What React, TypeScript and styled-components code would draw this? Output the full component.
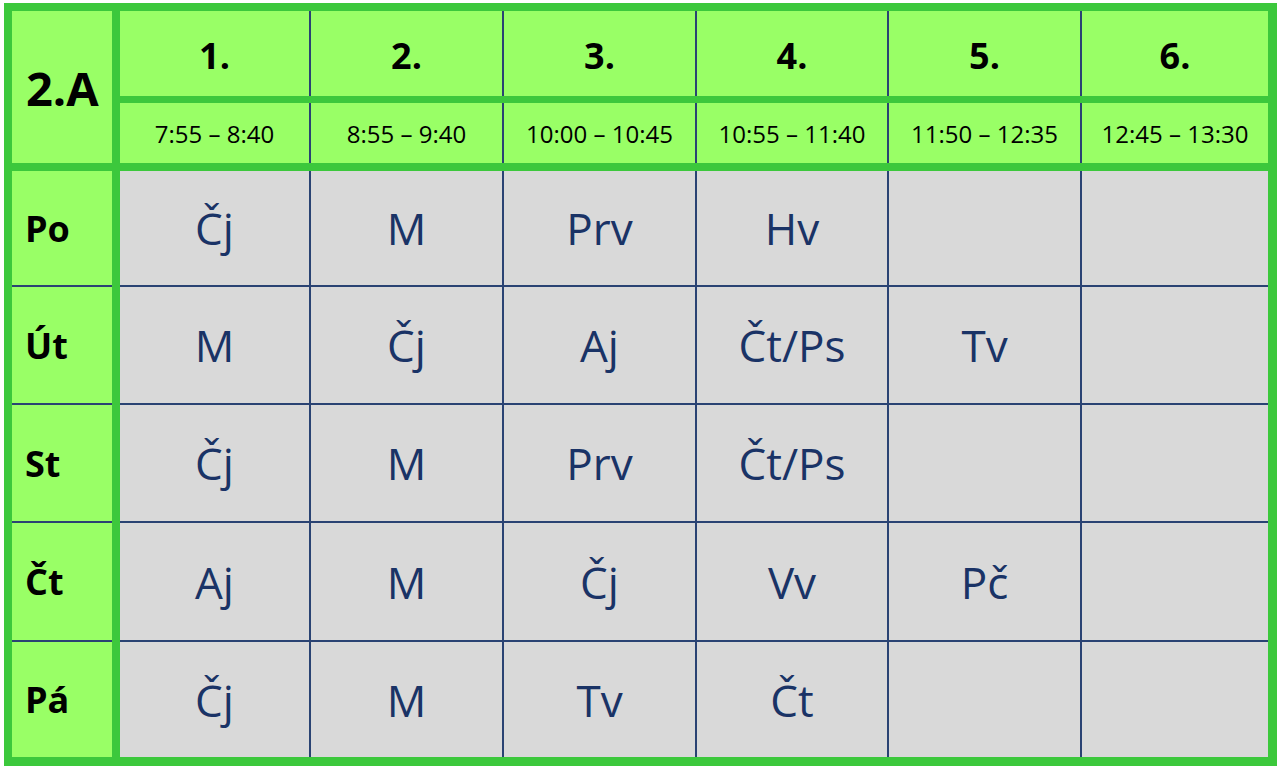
import styled, { createGlobalStyle } from "styled-components";

const GlobalStyle = createGlobalStyle`
  html, body {
    margin: 0;
    padding: 0;
    background: #ffffff;
  }
  body {
    font-family: "Open Sans", "Noto Sans", sans-serif;
  }
`;

const GREEN = "#3cc83c";
const LIGHT = "#99ff66";
const GREY = "#d9d9d9";
const NAVY = "#1a3366";
const LINE = "#2a4373";

const periods = [
  { no: "1.", time: "7:55 – 8:40" },
  { no: "2.", time: "8:55 – 9:40" },
  { no: "3.", time: "10:00 – 10:45" },
  { no: "4.", time: "10:55 – 11:40" },
  { no: "5.", time: "11:50 – 12:35" },
  { no: "6.", time: "12:45 – 13:30" },
];

const days = [
  { name: "Po", lessons: ["Čj", "M", "Prv", "Hv", "", ""] },
  { name: "Út", lessons: ["M", "Čj", "Aj", "Čt/Ps", "Tv", ""] },
  { name: "St", lessons: ["Čj", "M", "Prv", "Čt/Ps", "", ""] },
  { name: "Čt", lessons: ["Aj", "M", "Čj", "Vv", "Pč", ""] },
  { name: "Pá", lessons: ["Čj", "M", "Tv", "Čt", "", ""] },
];

const App = () => {
  return (
    <>
      <GlobalStyle />
      <Frame>
        <Corner>2.A</Corner>
        {periods.map((p, i) => (
          <PeriodNo key={p.no} $first={i === 0}>
            {p.no}
          </PeriodNo>
        ))}
        {periods.map((p, i) => (
          <PeriodTime key={p.time} $first={i === 0}>
            {p.time}
          </PeriodTime>
        ))}
        {days.map((d, r) => (
          <DayRow key={d.name} d={d} r={r} />
        ))}
      </Frame>
    </>
  );
};

const DayRow = ({ d, r }: { d: { name: string; lessons: string[] }; r: number }) => (
  <>
    <DayLabel $top={r > 0}>{d.name}</DayLabel>
    {d.lessons.map((l, c) => (
      <Lesson key={c} $top={r > 0} $left={c > 0}>
        {l}
      </Lesson>
    ))}
  </>
);

const Frame = styled.div`
  margin: 3px 0 0 4px;
  width: 1256px;
  height: 746px;
  border: 8px solid ${GREEN};
  border-right-width: 9px;
  border-bottom-width: 9px;
  background: ${GREEN};
  display: grid;
  grid-template-columns: 108px 189px 193px 193px 192px 193px 1fr;
  grid-template-rows: 92px 68px 114px 118px 118px 119px 1fr;
`;

const Cell = styled.div`
  display: flex;
  align-items: center;
  justify-content: center;
  box-sizing: border-box;
  min-width: 0;
`;

const Corner = styled(Cell)`
  grid-row: span 2;
  margin: 0 8px 8px 0;
  background: ${LIGHT};
  justify-content: flex-start;
  padding-left: 14px;
  padding-top: 2px;
  font-size: 47px;
  font-weight: 700;
  color: #000;
`;

const PeriodNo = styled(Cell)<{ $first: boolean }>`
  margin-bottom: 7px;
  background: ${LIGHT};
  border-left: ${(p) => (p.$first ? "none" : `2px solid ${LINE}`)};
  font-size: 36px;
  font-weight: 700;
  color: #000;
  padding-top: 4px;
`;

const PeriodTime = styled(Cell)<{ $first: boolean }>`
  margin-bottom: 8px;
  background: ${LIGHT};
  border-left: ${(p) => (p.$first ? "none" : `2px solid ${LINE}`)};
  font-size: 24px;
  color: #000;
`;

const DayLabel = styled(Cell)<{ $top: boolean }>`
  margin-right: 8px;
  background: ${LIGHT};
  border-top: ${(p) => (p.$top ? `2px solid ${LINE}` : "none")};
  justify-content: flex-start;
  padding-left: 13px;
  font-size: 36px;
  font-weight: 700;
  color: #000;
`;

const Lesson = styled(Cell)<{ $top: boolean; $left: boolean }>`
  background: ${GREY};
  border-top: ${(p) => (p.$top ? `2px solid ${LINE}` : "none")};
  border-left: ${(p) => (p.$left ? `2px solid ${LINE}` : "none")};
  font-size: 44px;
  color: ${NAVY};
`;

export default App;
